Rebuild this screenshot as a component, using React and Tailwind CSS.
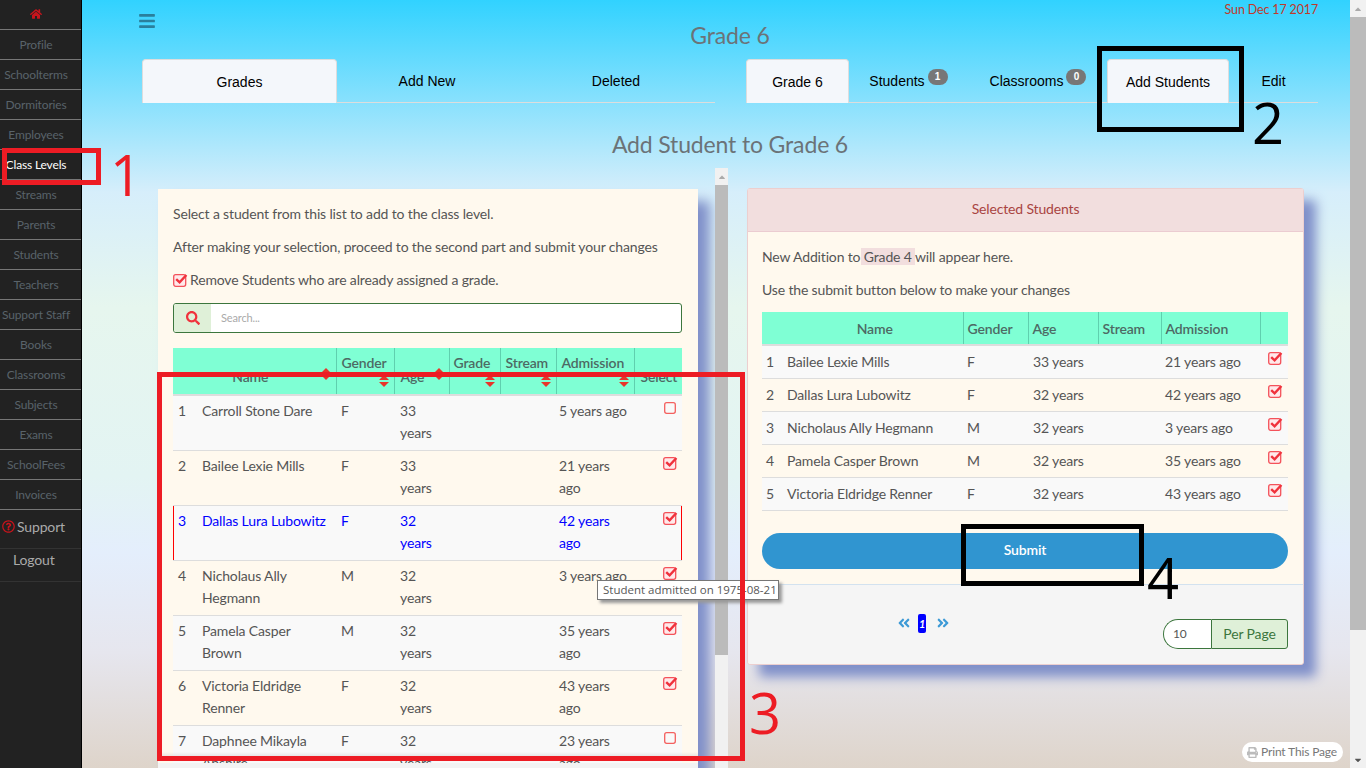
import { FaHome, FaBars, FaSearch, FaRegQuestionCircle, FaAngleDoubleLeft, FaAngleDoubleRight, FaPrint, FaCaretUp, FaCaretDown } from 'react-icons/fa'

const navItems = ['Profile', 'Schoolterms', 'Dormitories', 'Employees', 'Class Levels', 'Streams', 'Parents', 'Students', 'Teachers', 'Support Staff', 'Books', 'Classrooms', 'Subjects', 'Exams', 'SchoolFees', 'Invoices']

const leftRows = [
  { id: 1, name: 'Carroll Stone Dare', gender: 'F', age: '33 years', admission: '5 years ago', checked: false },
  { id: 2, name: 'Bailee Lexie Mills', gender: 'F', age: '33 years', admission: '21 years ago', checked: true },
  { id: 3, name: 'Dallas Lura Lubowitz', gender: 'F', age: '32 years', admission: '42 years ago', checked: true, active: true },
  { id: 4, name: 'Nicholaus Ally Hegmann', gender: 'M', age: '32 years', admission: '3 years ago', checked: true },
  { id: 5, name: 'Pamela Casper Brown', gender: 'M', age: '32 years', admission: '35 years ago', checked: true },
  { id: 6, name: 'Victoria Eldridge Renner', gender: 'F', age: '32 years', admission: '43 years ago', checked: true },
  { id: 7, name: 'Daphnee Mikayla Abshire', gender: 'F', age: '32 years', admission: '23 years ago', checked: false },
]

const rightRows = [
  { id: 1, name: 'Bailee Lexie Mills', gender: 'F', age: '33 years', admission: '21 years ago' },
  { id: 2, name: 'Dallas Lura Lubowitz', gender: 'F', age: '32 years', admission: '42 years ago' },
  { id: 3, name: 'Nicholaus Ally Hegmann', gender: 'M', age: '32 years', admission: '3 years ago' },
  { id: 4, name: 'Pamela Casper Brown', gender: 'M', age: '32 years', admission: '35 years ago' },
  { id: 5, name: 'Victoria Eldridge Renner', gender: 'F', age: '32 years', admission: '43 years ago' },
]

function SortIcon({ className }) {
  return (
    <svg width="10" height="12" viewBox="0 0 10 12" className={`absolute ${className}`}>
      <polygon points="5,0 10,5 0,5" fill="#e8342a" />
      <polygon points="0,7 10,7 5,12" fill="#e8342a" />
    </svg>
  )
}

function CheckBox({ className = '' }) {
  return (
    <svg width="16" height="14" viewBox="0 0 16 14" className={className}>
      <rect x="0.7" y="1.7" width="12" height="11.6" rx="2" fill="#ffe9ea" stroke="#f4525a" strokeWidth="1.3" />
      <path d="M3.2 6.2 L6.6 9.4 L13.4 2" fill="none" stroke="#f0323c" strokeWidth="2.4" />
    </svg>
  )
}

function EmptyBox({ className = '' }) {
  return (
    <svg width="14" height="14" viewBox="0 0 14 14" className={className}>
      <rect x="1.7" y="1.7" width="10.6" height="10.6" rx="2" fill="none" stroke="#f4605f" strokeWidth="1.3" />
    </svg>
  )
}

function Tab({ children, active, className = '' }) {
  return (
    <div className={`h-[44px] pt-[1px] flex items-center justify-center text-[14px] tracking-normal text-black font-['Liberation_Sans',sans-serif] ${active ? 'bg-[#f4f7fb] border border-b-0 border-[#ddd] rounded-t' : 'border-b border-[#ddd]'} ${className}`}>
      {children}
    </div>
  )
}

function Badge({ children }) {
  return <span className="ml-[3px] -mt-[8px] w-[20px] h-[16px] rounded-full bg-[#777] text-white text-[10px] font-bold leading-[16px] text-center">{children}</span>
}

function Annotation({ color, box, text, textClass }) {
  return (
    <>
      <div className={`absolute border-[5px] ${box}`} style={{ borderColor: color }} />
      <div className={`absolute font-['Open_Sans',sans-serif] tracking-normal text-[56px] leading-none ${textClass}`} style={{ color }}>{text}</div>
    </>
  )
}

export default function App() {
  return (
    <div className="relative flex h-screen w-full overflow-hidden font-['Lato',sans-serif] text-[14px] tracking-[-0.15px] text-[#555]">
      {/* Sidebar */}
      <aside className="w-[82px] shrink-0 bg-[#222] border-r border-black">
        <div className="h-[30px] flex items-center justify-center pr-[9px] border-b border-[#777] text-[#c9141c]">
          <FaHome size={12} className="-mt-[2px]" />
        </div>
        {navItems.map((item) => (
          <div key={item} className={`h-[30px] flex items-center justify-center pr-[9px] border-b border-[#777] text-[12px] whitespace-nowrap ${item === 'Class Levels' ? 'text-white' : 'text-[#59636a]'}`}>
            {item}
          </div>
        ))}
        <div className="h-[39px] pb-[6px] flex items-center pl-[2px] border-b border-[#333] text-[14px] text-[#aaa]">
          <FaRegQuestionCircle size={13} className="text-[#c9141c] mr-[2px]" />
          Support
        </div>
        <div className="h-[33px] pl-[13px] leading-[22px] border-b border-[#333] text-[14px] text-[#aaa]">Logout</div>
      </aside>

      {/* Main */}
      <main className="flex-1 overflow-hidden pl-[60px] pr-[32px] bg-[linear-gradient(180deg,#31d2ff_0%,#d6eefb_25%,#e6f6ee_40%,#e3f4f3_62%,#e4eefc_72%,#e6e6ee_85%,#ded4ca_100%)]">
        <div className="grid grid-cols-[1fr_auto_1fr] h-[59px]">
          <div className="pt-[12px] -ml-[4px] text-[#2a7f9c]"><FaBars size={18} /></div>
          <h1 className="pt-[20px] text-[23px] leading-[30px] text-[#6b7378]">Grade 6</h1>
          <div className="pt-[1px] text-right text-[12.5px] leading-[18px] text-[#c0392b]">Sun Dec 17 2017</div>
        </div>

        <div className="flex justify-between">
          <div className="flex w-[573px]">
            <Tab active className="w-[195px]">Grades</Tab>
            <Tab className="w-[180px]">Add New</Tab>
            <Tab className="w-[198px]">Deleted</Tab>
          </div>
          <div className="flex w-[572px]">
            <Tab active className="w-[103px]">Grade 6</Tab>
            <Tab className="w-[120px] pr-[1px]">Students<Badge>1</Badge></Tab>
            <Tab className="w-[138px]">Classrooms<Badge>0</Badge></Tab>
            <Tab active className="w-[122px]">Add Students</Tab>
            <Tab className="w-[89px]">Edit</Tab>
          </div>
        </div>

        <h2 className="mt-[26px] text-center text-[23px] leading-[30px] text-[#6b7378]">Add Student to Grade 6</h2>

        <div className="flex mt-[9px]">
          {/* Left panel */}
          <div className="w-[589px] shrink-0 flex items-start pl-[16px] h-[600px]">
            <section className="mt-[21px] w-[540px] shrink-0 bg-[#fff9ee] pt-[14px] pl-[15px] pr-[16px] shadow-[12px_12px_12px_#7f8fc9]">
              <p className="leading-[22px] mb-[11px]">Select a student from this list to add to the class level.</p>
              <p className="leading-[22px] mb-[11px]">After making your selection, proceed to the second part and submit your changes</p>
              <p className="flex items-center leading-[22px] mb-[12px]">
                <CheckBox className="mr-[1px]" />
                Remove Students who are already assigned a grade.
              </p>
              <div className="flex h-[30px] border border-[#3c763d] rounded-[3px] bg-white overflow-hidden">
                <div className="w-[37px] bg-[#dff0d8] flex items-center justify-center text-[#f0323c]"><FaSearch size={14} /></div>
                <div className="pl-[10px] text-[11px] leading-[28px] text-[#aaa]">Search...</div>
              </div>
              <table className="mt-[15px] w-[509px] table-fixed border-collapse">
                <colgroup>
                  <col className="w-[29px]" />
                  <col className="w-[134px]" />
                  <col className="w-[58px]" />
                  <col className="w-[55px]" />
                  <col className="w-[51px]" />
                  <col className="w-[56px]" />
                  <col className="w-[78px]" />
                  <col className="w-[48px]" />
                </colgroup>
                <thead>
                  <tr className="h-[47px] bg-[#7fffd4] text-[#4d6a64] border-b-2 border-[#ddd]">
                    <th colSpan={2} className="relative font-semibold text-center align-bottom pb-[7px] pr-[8px] border-r border-[#5fd0ae]">Name<SortIcon className="right-[5px] top-[20px]" /></th>
                    <th className="relative font-semibold text-left align-top pt-[4px] pl-[5px] border-r border-[#5fd0ae]">Gender<SortIcon className="right-[5px] top-[27px]" /></th>
                    <th className="relative font-semibold text-left align-bottom pb-[7px] pl-[6px] border-r border-[#5fd0ae]">Age<SortIcon className="right-[5px] top-[20px]" /></th>
                    <th className="relative font-semibold text-left align-top pt-[4px] pl-[4px] border-r border-[#5fd0ae]">Grade<SortIcon className="right-[5px] top-[27px]" /></th>
                    <th className="relative font-semibold text-left align-top pt-[4px] pl-[5px] border-r border-[#5fd0ae]">Stream<SortIcon className="right-[5px] top-[27px]" /></th>
                    <th className="relative font-semibold text-left align-top pt-[4px] pl-[5px] border-r border-[#5fd0ae]">Admission<SortIcon className="right-[5px] top-[27px]" /></th>
                    <th className="font-semibold text-left align-bottom pb-[7px] pl-[6px]">Select</th>
                  </tr>
                </thead>
                <tbody>
                  {leftRows.map((r) => (
                    <tr key={r.id} className={`h-[55px] align-top leading-[22px] border-b border-[#ddd] ${r.id % 2 === 1 ? 'bg-[#f9f9f9]' : ''} ${r.active ? 'text-[#0000ff]' : ''}`}>
                      <td className={`pt-[4px] pl-[5px] ${r.active ? 'bg-[linear-gradient(#ff0000,#ff0000)] bg-no-repeat bg-left bg-[length:1px_100%]' : ''}`}>{r.id}</td>
                      <td className="pt-[4px] pr-[6px]">{r.name}</td>
                      <td className="pt-[4px] pl-[5px]">{r.gender}</td>
                      <td className="pt-[4px] pl-[6px] pr-[12px]">{r.age}</td>
                      <td></td>
                      <td></td>
                      <td className="pt-[4px] pl-[3px]">{r.admission}</td>
                      <td className={`pt-[5px] pl-[29px] ${r.active ? 'bg-[linear-gradient(#ff0000,#ff0000)] bg-no-repeat bg-right bg-[length:1px_100%]' : ''}`}>
                        {r.checked ? <CheckBox /> : <EmptyBox />}
                      </td>
                    </tr>
                  ))}
                </tbody>
              </table>
            </section>
            <div className="ml-[17px] w-[13px] shrink-0 h-full bg-[#f1f1f1]">
              <div className="h-[17px] flex items-center justify-center text-[#aaa]"><FaCaretUp size={10} /></div>
              <div className="h-[470px] bg-[#bbb]" />
            </div>
          </div>

          {/* Right panel */}
          <section className="ml-[16px] mt-[20px] w-[557px] h-[477px] bg-[#fff9ee] border border-[#eccfcf] rounded-[3px] shadow-[12px_12px_12px_#7f8fc9] self-start">
            <div className="h-[43px] pb-[3px] flex items-center justify-center bg-[#f2dede] border-b border-[#ebccd1] text-[#a94442]">Selected Students</div>
            <div className="px-[14px] pt-[14px]">
              <p className="leading-[22px] mb-[11px]">New Addition to <span className="bg-[#f2dede] px-[3px] -mx-[3px]">Grade 4</span> will appear here.</p>
              <p className="leading-[22px] mb-[11px]">Use the submit button below to make your changes</p>
              <table className="w-[526px] table-fixed border-collapse">
                <colgroup>
                  <col className="w-[25px]" />
                  <col className="w-[176px]" />
                  <col className="w-[65px]" />
                  <col className="w-[70px]" />
                  <col className="w-[63px]" />
                  <col className="w-[99px]" />
                  <col className="w-[28px]" />
                </colgroup>
                <thead>
                  <tr className="h-[33px] bg-[#7fffd4] text-[#4d6a64] border-b-2 border-[#ddd]">
                    <th className="font-semibold"></th>
                    <th className="font-semibold text-center border-r border-[#5fd0ae]">Name</th>
                    <th className="font-semibold text-left pl-[4px] border-r border-[#5fd0ae]">Gender</th>
                    <th className="font-semibold text-left pl-[4px] border-r border-[#5fd0ae]">Age</th>
                    <th className="font-semibold text-left pl-[4px] border-r border-[#5fd0ae]">Stream</th>
                    <th className="font-semibold text-left pl-[4px] border-r border-[#5fd0ae]">Admission</th>
                    <th></th>
                  </tr>
                </thead>
                <tbody>
                  {rightRows.map((r) => (
                    <tr key={r.id} className={`h-[33px] leading-[22px] align-top border-b border-[#ddd] ${r.id % 2 === 1 ? 'bg-[#f9f9f9]' : ''}`}>
                      <td className="pt-[5px] pl-[4px]">{r.id}</td>
                      <td className="pt-[5px]">{r.name}</td>
                      <td className="pt-[5px] pl-[4px]">{r.gender}</td>
                      <td className="pt-[5px] pl-[5px]">{r.age}</td>
                      <td></td>
                      <td className="pt-[5px] pl-[4px]">{r.admission}</td>
                      <td className="pt-[5px] pl-[8px]"><CheckBox /></td>
                    </tr>
                  ))}
                </tbody>
              </table>
              <button className="mt-[22px] pb-[2px] block w-[526px] h-[36px] rounded-full bg-[#3095d0] text-white font-semibold">Submit</button>
            </div>
            <div className="mt-[15px] h-[80px] bg-[#f5f5f5] border-t border-[#d3e2ef] flex items-start justify-between pl-[149px] pr-[15px] rounded-b-[3px]">
              <div className="flex items-center mt-[29px] text-[#3d9ad6]">
                <FaAngleDoubleLeft size={14} />
                <span className="ml-[7px] w-[8px] h-[19px] rounded-[2px] bg-[#0000ff] text-white italic text-[11px] font-bold leading-[19px] text-center">1</span>
                <FaAngleDoubleRight size={14} className="ml-[10px]" />
              </div>
              <div className="flex mt-[34px] h-[30px] w-[125px]">
                <div className="w-[48px] bg-white border border-r-0 border-[#3c763d] rounded-l-full pl-[9px] text-[12px] leading-[28px]">10</div>
                <div className="flex-1 bg-[#dff0d8] border border-[#3c763d] rounded-r-[3px] text-center text-[#3c763d] leading-[28px]">Per Page</div>
              </div>
            </div>
          </section>
        </div>
      </main>

      {/* Page scrollbar */}
      <div className="w-[16px] shrink-0 bg-[#f1f1f1] flex flex-col text-[#555]">
        <div className="h-[17px] flex items-center justify-center text-[#aaa]"><FaCaretUp size={10} /></div>
        <div className="h-[613px] bg-[#bbb]" />
        <div className="flex-1 flex items-end justify-center pb-[3px]"><FaCaretDown size={10} /></div>
      </div>

      {/* Overlays */}
      <div className="absolute left-[158px] top-[752px] w-[540px] h-[9px] bg-gradient-to-b from-transparent to-[#cfcfcf]" />
      <div className="absolute left-[158px] top-[763px] w-[540px] h-[5px] bg-[#f3f3f3]" />
      <div className="absolute left-[597px] top-[580px] w-[182px] h-[20px] bg-white border border-[#767676] shadow-[3px_3px_3px_#999] text-[11.5px] tracking-normal leading-[18px] pl-[5px] whitespace-nowrap font-['Open_Sans',sans-serif] text-[#575757]">Student admitted on 1975-08-21</div>
      <div className="absolute left-[1242px] top-[742px] w-[101px] h-[20px] rounded-full bg-white flex items-center pl-[5px] text-[12px] text-[#777] whitespace-nowrap">
        <FaPrint size={11} className="text-[#bbb] mr-[3px]" />Print This Page
      </div>

      <Annotation color="#ed1c24" box="left-[2px] top-[148px] w-[99px] h-[37px]" text="1" textClass="left-[110px] top-[146px]" />
      <Annotation color="#000" box="left-[1097px] top-[46px] w-[147px] h-[86px]" text="2" textClass="left-[1252px] top-[94px]" />
      <Annotation color="#ed1c24" box="left-[157px] top-[372px] w-[588px] h-[389px]" text="3" textClass="left-[749px] top-[684px]" />
      <Annotation color="#000" box="left-[961px] top-[524px] w-[183px] h-[62px]" text="4" textClass="left-[1147px] top-[549px]" />
    </div>
  )
}
